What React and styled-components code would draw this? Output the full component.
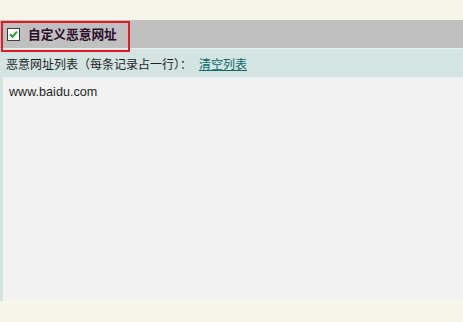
import React from "react";
import styled, { createGlobalStyle } from "styled-components";

const Global = createGlobalStyle`
  html, body { margin: 0; padding: 0; background: #f7f6ea; }
  body { font-family: "Noto Sans CJK SC", "Liberation Sans", sans-serif; font-size: 12px; color: #222; }
`;

const Page = styled.div`
  width: 463px;
  height: 322px;
  padding-top: 20px;
  box-sizing: border-box;
  background: #f7f6ea;
`;

const Header = styled.div`
  position: relative;
  display: flex;
  align-items: center;
  gap: 8px;
  height: 28px;
  padding-left: 7px;
  background: #c0c0c0;
  border-bottom: 1px solid #e7efed;
`;

const Check = styled.span`
  display: inline-flex;
  align-items: center;
  justify-content: center;
  width: 13px;
  height: 13px;
  box-sizing: border-box;
  border: 1px solid #3e3e3e;
  background: #fcfcfc;
`;

const Title = styled.span`
  font-family: "Noto Sans CJK SC", sans-serif;
  font-weight: 700;
  font-size: 12.7px;
  color: #2b0b2b;
  line-height: 1;
`;

const Highlight = styled.div`
  position: absolute;
  left: 1px;
  top: 1px;
  width: 129px;
  height: 31px;
  box-sizing: border-box;
  border: 2px solid #e01b22;
  pointer-events: none;
`;

const Panel = styled.div`
  background: #d4e4e2;
  display: flex;
  flex-direction: column;
`;

const LabelRow = styled.div`
  display: flex;
  align-items: center;
  height: 28px;
  padding-left: 6px;
  font-size: 12px;
  color: #1e1e1e;
`;

const ClearLink = styled.a`
  margin-left: 7px;
  color: #0b6a6a;
  text-decoration: underline;
  cursor: pointer;
`;

const Area = styled.textarea`
  display: block;
  margin: 0 0 0 3px;
  width: calc(100% - 3px);
  height: 224px;
  box-sizing: border-box;
  padding: 7px 6px;
  border: none;
  outline: none;
  resize: none;
  background: #f3f3f3;
  box-shadow: inset 0 2px 0 #eef0f3;
  font-family: "Liberation Sans", Arial, sans-serif;
  font-size: 12.6px;
  line-height: 16px;
  color: #1e1e1e;
`;

export default function App() {
  return (
    <>
      <Global />
      <Page>
        <Header>
          <Check>
            <svg width="9" height="9" viewBox="0 0 9 9">
              <path d="M1 4.2 L3.4 6.8 L8 1.6" fill="none" stroke="#22a12c" strokeWidth="2" />
            </svg>
          </Check>
          <Title>自定义恶意网址</Title>
          <Highlight />
        </Header>
        <Panel>
          <LabelRow>
            <span>恶意网址列表（每条记录占一行）：</span>
            <ClearLink>清空列表</ClearLink>
          </LabelRow>
          <Area readOnly defaultValue="www.baidu.com" />
        </Panel>
      </Page>
    </>
  );
}
